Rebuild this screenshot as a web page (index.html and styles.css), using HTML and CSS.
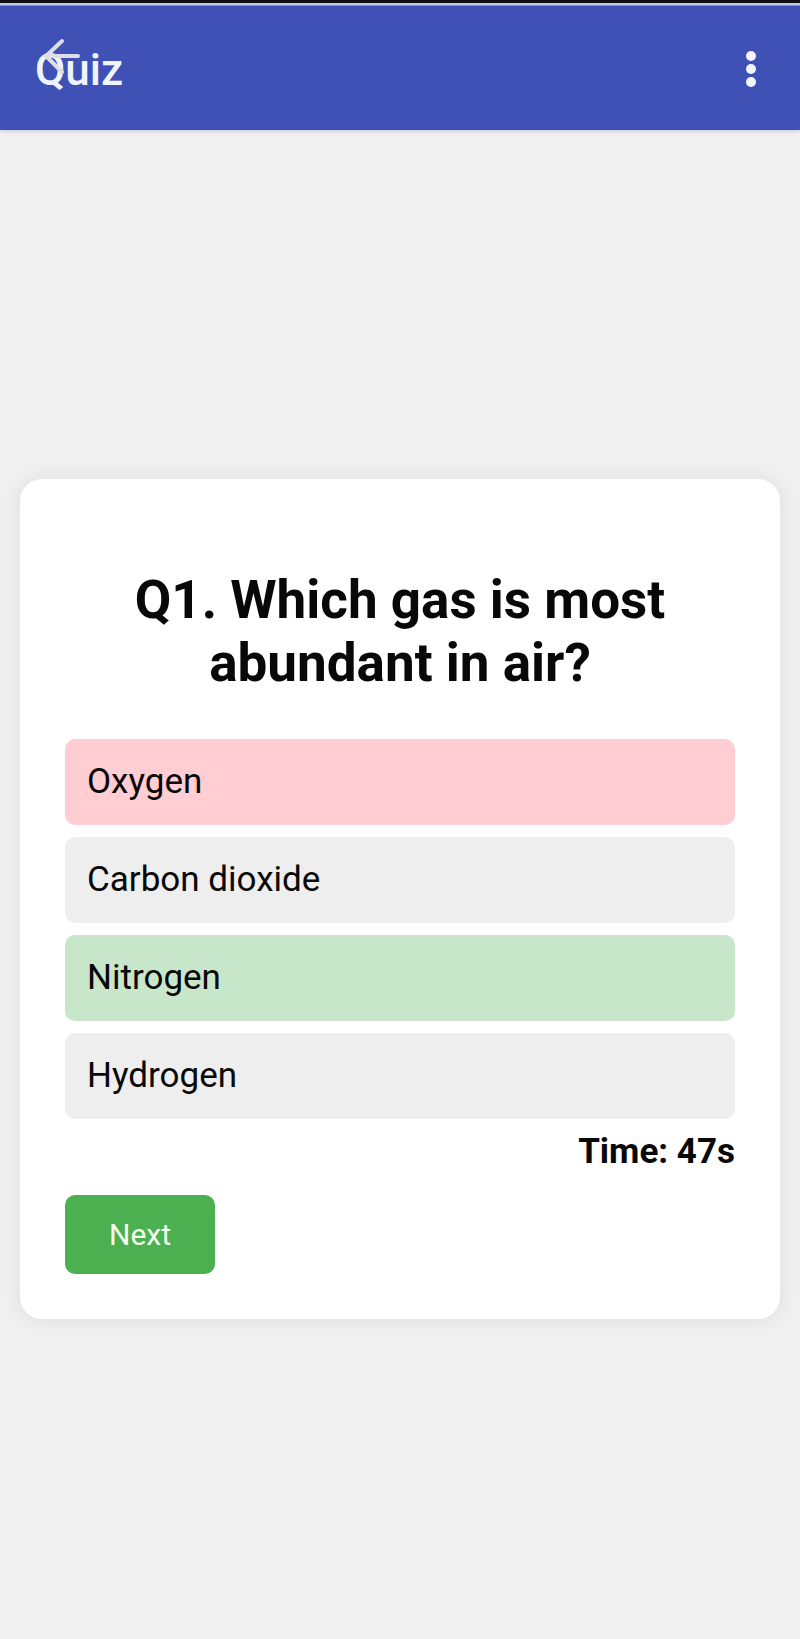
FILE: index.html
```html
<!DOCTYPE html>
<html lang="en">
<head>
<meta charset="utf-8">
<meta name="viewport" content="width=device-width, initial-scale=1">
<title>Quiz</title>
<link rel="stylesheet" href="styles.css">
</head>
<body>
<header class="appbar">
  <div class="brand">
    <h1 class="title">Quiz</h1>
    <button class="back" type="button" aria-label="Back">
      <svg class="back-icon" viewBox="0 0 40 36" aria-hidden="true"><path d="M36 18H4M20 3L4 18l16 16"/></svg>
    </button>
  </div>
  <button class="more" type="button" aria-label="More options">
    <svg class="more-icon" viewBox="0 0 12 40" aria-hidden="true"><circle cx="6" cy="6" r="5"/><circle cx="6" cy="19" r="5"/><circle cx="6" cy="32" r="5"/></svg>
  </button>
</header>
<main class="page">
  <section class="card">
    <h2 class="question">Q1. Which gas is most abundant in air?</h2>
    <div class="options">
      <button class="option wrong" type="button">Oxygen</button>
      <button class="option" type="button">Carbon dioxide</button>
      <button class="option correct" type="button">Nitrogen</button>
      <button class="option" type="button">Hydrogen</button>
    </div>
    <p class="timer">Time: 47s</p>
    <button class="next" type="button">Next</button>
  </section>
</main>
</body>
</html>
```
FILE: styles.css
```css
* { box-sizing: border-box; }
body {
  margin: 0;
  min-height: 100vh;
  display: flex;
  flex-direction: column;
  background: #f0f0f0;
  color: #080808;
  font-family: Roboto, sans-serif;
}
button { border: 0; font-family: inherit; color: inherit; }
.appbar {
  display: flex;
  align-items: center;
  justify-content: space-between;
  height: 130px;
  padding: 6px 35px 0;
  border-top: 3px solid #101014;
  background: #3f51b5;
  box-shadow: inset 0 2px 0 #c0c8e8, inset 0 3px 0 #8490c8, 0 1px 4px rgba(63, 81, 181, .25);
}
.brand { position: relative; }
.title { margin: 0; font-size: 44px; line-height: 52px; font-weight: 500; color: #f0f4ff; }
.back { position: absolute; top: -6px; left: 7px; padding: 0; background: none; }
.back-icon {
  display: block;
  width: 40px;
  height: 36px;
  fill: none;
  stroke: #dcdfe6;
  stroke-width: 4;
  stroke-linecap: round;
}
.more { padding: 0 8px; background: none; }
.more-icon { display: block; width: 12px; height: 40px; fill: #f4f6ff; }
.page { flex: 1; display: flex; align-items: center; padding: 48px 20px 20px; }
.card {
  width: 100%;
  padding: 90px 45px 45px;
  border-radius: 22px;
  background: #fff;
  box-shadow: 0 0 22px rgba(0, 0, 0, .08);
}
.question { margin: 0 0 44px; font-size: 53px; line-height: 63px; font-weight: 700; text-align: center; }
.options { display: grid; gap: 12px; }
.option {
  height: 86px;
  padding: 0 22px;
  border-radius: 10px;
  background: #eee;
  font-size: 35px;
  text-align: left;
}
.wrong { background: #ffcdd2; }
.correct { background: #c8e6c9; }
.timer { margin: 12px 0 22px; font-size: 35px; line-height: 42px; font-weight: 700; text-align: right; }
.next {
  height: 79px;
  padding: 0 44px;
  border-radius: 10px;
  background: #4caf50;
  color: #f4fff0;
  font-size: 30px;
}
```
